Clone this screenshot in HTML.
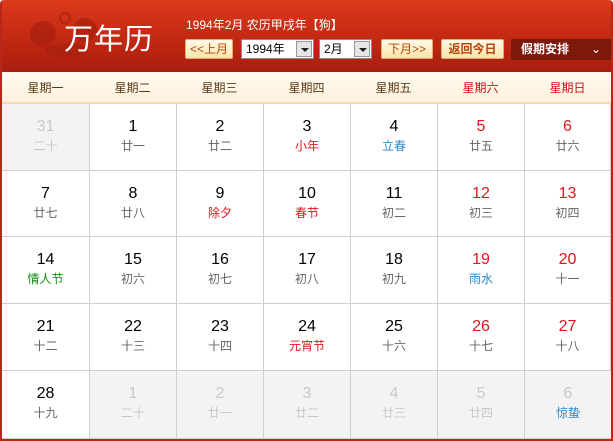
<!DOCTYPE html>
<html><head><meta charset="utf-8"><style>
*{margin:0;padding:0;box-sizing:border-box}
body{width:613px;height:441px;background:#fff;position:relative;overflow:hidden;font-family:"Liberation Sans","Noto Sans CJK SC",sans-serif}
.frame{position:absolute;left:0;top:0;width:613px;height:441px;border:2px solid #b8281a;border-top:none;border-radius:4px 4px 0 0}
.hdr{position:absolute;left:0;top:0;width:613px;height:72px;background:linear-gradient(#dc3a1c,#c72b14 45%,#a91e0e);border-radius:5px 5px 0 0}
.title{position:absolute;left:64px;top:16px;color:#fff;font-size:29px;letter-spacing:1px}
.sub{position:absolute;left:186px;top:16px;color:#fff;font-size:12px}
.btn{position:absolute;top:39px;height:20px;background:linear-gradient(#fffbe8,#fbe3a8);border:1px solid #d9b070;color:#b8460f;font-size:12px;text-align:center;line-height:18px;border-radius:2px}
.sel{position:absolute;top:39px;height:20px;background:#fff;border:1px solid #8a8a8a;font-size:12px;line-height:18px;padding-left:4px;color:#000}
.sel i{position:absolute;right:1px;top:1px;width:16px;height:16px;background:#e6e6e6;border:1px solid #999}
.sel i:after{content:"";position:absolute;left:4px;top:6px;border:4px solid transparent;border-top:4px solid #222}
.hol{position:absolute;left:511px;top:39px;width:100px;height:21px;background:#7d180c;color:#fff;font-size:12px;font-weight:bold;line-height:21px;padding-left:10px}
.wk{position:absolute;left:2px;top:72px;width:609px;height:32px;background:linear-gradient(#fffaf0,#fdf1dc);border-bottom:2px solid #f3d9b0}
.wk span{position:absolute;top:7px;width:87px;text-align:center;font-size:12px;color:#5a3a1a}
.c{position:absolute;border-right:1px solid #cfcfcf;border-bottom:1px solid #cfcfcf;text-align:center}
.c b{display:block;font-weight:normal;font-size:16px;margin-top:14px;color:#000;line-height:18px}
.c s{display:block;text-decoration:none;font-size:12px;color:#666;line-height:16px;margin-top:2px}
.g{background:#f3f3f3}.g b,.g s{color:#c8c8c8}
.r b{color:#e0141c}
.lr{color:#e0141c!important}.lb{color:#2b8ac8!important}.lg{color:#128a12!important}
</style></head><body>
<div class="hdr"></div>
<svg style="position:absolute;left:25px;top:12px" width="80" height="46"><g fill="#a8200f" opacity="0.7"><circle cx="18" cy="22" r="13"/><circle cx="60" cy="18" r="12"/><ellipse cx="42" cy="38" rx="22" ry="7"/><circle cx="40" cy="6" r="5" fill="none" stroke="#a8200f" stroke-width="2"/></g></svg>
<div class="title">万年历</div>
<div class="sub">1994年2月 农历甲戌年【狗】</div>
<div class="btn" style="left:185px;width:48px">&lt;&lt;上月</div>
<div class="sel" style="left:241px;width:73px">1994年<i></i></div>
<div class="sel" style="left:319px;width:53px">2月<i></i></div>
<div class="btn" style="left:381px;width:52px">下月&gt;&gt;</div>
<div class="btn" style="left:441px;width:63px;font-weight:bold">返回今日</div>
<div class="hol">假期安排 <span style="float:right;margin-right:10px;font-weight:normal">⌄</span></div>
<div class="wk">
<span style="left:0">星期一</span><span style="left:87px">星期二</span><span style="left:174px">星期三</span><span style="left:261px">星期四</span><span style="left:348px">星期五</span><span style="left:435px;color:#d0101a">星期六</span><span style="left:522px;color:#d0101a">星期日</span>
</div>
<div class="c g" style="left:2px;top:104px;width:88px;height:67px"><b>31</b><s>二十</s></div>
<div class="c" style="left:90px;top:104px;width:87px;height:67px"><b>1</b><s>廿一</s></div>
<div class="c" style="left:177px;top:104px;width:87px;height:67px"><b>2</b><s>廿二</s></div>
<div class="c" style="left:264px;top:104px;width:87px;height:67px"><b>3</b><s class="lr">小年</s></div>
<div class="c" style="left:351px;top:104px;width:87px;height:67px"><b>4</b><s class="lb">立春</s></div>
<div class="c r" style="left:438px;top:104px;width:87px;height:67px"><b>5</b><s>廿五</s></div>
<div class="c r" style="left:525px;top:104px;width:86px;height:67px"><b>6</b><s>廿六</s></div>

<div class="c" style="left:2px;top:171px;width:88px;height:66px"><b>7</b><s>廿七</s></div>
<div class="c" style="left:90px;top:171px;width:87px;height:66px"><b>8</b><s>廿八</s></div>
<div class="c" style="left:177px;top:171px;width:87px;height:66px"><b>9</b><s class="lr">除夕</s></div>
<div class="c" style="left:264px;top:171px;width:87px;height:66px"><b>10</b><s class="lr">春节</s></div>
<div class="c" style="left:351px;top:171px;width:87px;height:66px"><b>11</b><s>初二</s></div>
<div class="c r" style="left:438px;top:171px;width:87px;height:66px"><b>12</b><s>初三</s></div>
<div class="c r" style="left:525px;top:171px;width:86px;height:66px"><b>13</b><s>初四</s></div>

<div class="c" style="left:2px;top:237px;width:88px;height:67px"><b>14</b><s class="lg">情人节</s></div>
<div class="c" style="left:90px;top:237px;width:87px;height:67px"><b>15</b><s>初六</s></div>
<div class="c" style="left:177px;top:237px;width:87px;height:67px"><b>16</b><s>初七</s></div>
<div class="c" style="left:264px;top:237px;width:87px;height:67px"><b>17</b><s>初八</s></div>
<div class="c" style="left:351px;top:237px;width:87px;height:67px"><b>18</b><s>初九</s></div>
<div class="c r" style="left:438px;top:237px;width:87px;height:67px"><b>19</b><s class="lb">雨水</s></div>
<div class="c r" style="left:525px;top:237px;width:86px;height:67px"><b>20</b><s>十一</s></div>

<div class="c" style="left:2px;top:304px;width:88px;height:67px"><b>21</b><s>十二</s></div>
<div class="c" style="left:90px;top:304px;width:87px;height:67px"><b>22</b><s>十三</s></div>
<div class="c" style="left:177px;top:304px;width:87px;height:67px"><b>23</b><s>十四</s></div>
<div class="c" style="left:264px;top:304px;width:87px;height:67px"><b>24</b><s class="lr">元宵节</s></div>
<div class="c" style="left:351px;top:304px;width:87px;height:67px"><b>25</b><s>十六</s></div>
<div class="c r" style="left:438px;top:304px;width:87px;height:67px"><b>26</b><s>十七</s></div>
<div class="c r" style="left:525px;top:304px;width:86px;height:67px"><b>27</b><s>十八</s></div>

<div class="c" style="left:2px;top:371px;width:88px;height:68px"><b>28</b><s>十九</s></div>
<div class="c g" style="left:90px;top:371px;width:87px;height:68px"><b>1</b><s>二十</s></div>
<div class="c g" style="left:177px;top:371px;width:87px;height:68px"><b>2</b><s>廿一</s></div>
<div class="c g" style="left:264px;top:371px;width:87px;height:68px"><b>3</b><s>廿二</s></div>
<div class="c g" style="left:351px;top:371px;width:87px;height:68px"><b>4</b><s>廿三</s></div>
<div class="c g" style="left:438px;top:371px;width:87px;height:68px"><b>5</b><s>廿四</s></div>
<div class="c g" style="left:525px;top:371px;width:86px;height:68px;border-right:none"><b>6</b><s class="lb">惊蛰</s></div>
<div class="frame"></div>
</body></html>
